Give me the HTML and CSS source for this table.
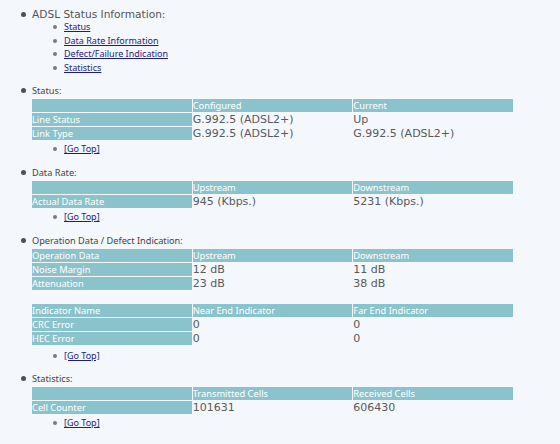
FILE: index.html
```html
<!DOCTYPE html>
<html>
<head>
<meta charset="utf-8">
<link rel="stylesheet" href="styles.css">
</head>
<body>
<ul class="main">
  <li class="section-top">
    <div class="title bullet">ADSL Status Information:</div>
    <ul class="sub">
      <li><a href="#status">Status</a></li>
      <li><a href="#rate">Data Rate Information</a></li>
      <li><a href="#defect">Defect/Failure Indication</a></li>
      <li><a href="#stats">Statistics</a></li>
    </ul>
  </li>
  <li class="section" id="status">
    <div class="label bullet">Status:</div>
    <table class="grid">
      <tr><th class="head"></th><th>Configured</th><th>Current</th></tr>
      <tr><th class="head">Line Status</th><td>G.992.5 (ADSL2+)</td><td>Up</td></tr>
      <tr><th class="head">Link Type</th><td>G.992.5 (ADSL2+)</td><td>G.992.5 (ADSL2+)</td></tr>
    </table>
    <ul class="sub"><li><a href="#">[Go Top]</a></li></ul>
  </li>
  <li class="section" id="rate">
    <div class="label bullet">Data Rate:</div>
    <table class="grid">
      <tr><th class="head"></th><th>Upstream</th><th>Downstream</th></tr>
      <tr><th class="head">Actual Data Rate</th><td>945 (Kbps.)</td><td>5231 (Kbps.)</td></tr>
    </table>
    <ul class="sub"><li><a href="#">[Go Top]</a></li></ul>
  </li>
  <li class="section" id="defect">
    <div class="label bullet">Operation Data / Defect Indication:</div>
    <table class="grid">
      <tr><th class="head">Operation Data</th><th>Upstream</th><th>Downstream</th></tr>
      <tr><th class="head">Noise Margin</th><td>12 dB</td><td>11 dB</td></tr>
      <tr><th class="head">Attenuation</th><td>23 dB</td><td>38 dB</td></tr>
    </table>
    <table class="grid second">
      <tr><th class="head">Indicator Name</th><th>Near End Indicator</th><th>Far End Indicator</th></tr>
      <tr><th class="head">CRC Error</th><td>0</td><td>0</td></tr>
      <tr><th class="head">HEC Error</th><td>0</td><td>0</td></tr>
    </table>
    <ul class="sub"><li><a href="#">[Go Top]</a></li></ul>
  </li>
  <li class="section" id="stats">
    <div class="label bullet">Statistics:</div>
    <table class="grid">
      <tr><th class="head"></th><th>Transmitted Cells</th><th>Received Cells</th></tr>
      <tr><th class="head">Cell Counter</th><td>101631</td><td>606430</td></tr>
    </table>
    <ul class="sub"><li><a href="#">[Go Top]</a></li></ul>
  </li>
</ul>
</body>
</html>
```

FILE: styles.css
```css
html, body {
  background: #f4f7fb;
}
body {
  margin: 8px;
  font-family: "DejaVu Sans", sans-serif;
  color: #4a4a4a;
}
ul {
  margin: 0;
  padding: 0;
  list-style: none;
}
.main {
  padding-left: 24px;
}
.bullet::before {
  content: "";
  display: inline-block;
  width: 5px;
  height: 5px;
  border-radius: 50%;
  background: #505050;
  margin-left: -11.5px;
  margin-right: 6.5px;
  vertical-align: 1px;
}
.title {
  font-size: 10.6px;
  line-height: 12px;
  color: #555;
}
.sub {
  padding-left: 32px;
}
.sub > li {
  font-family: "Noto Sans", sans-serif;
  font-size: 9px;
  line-height: 13.6px;
}
.sub > li::before {
  content: "";
  display: inline-block;
  width: 4px;
  height: 4px;
  border-radius: 50%;
  background: #7a7a7a;
  margin-left: -11.5px;
  margin-right: 7.5px;
  vertical-align: 1px;
}
.sub a {
  color: #1e1e7e;
  text-decoration: underline;
}
.section {
  margin-top: 11px;
}
.label {
  font-family: "Noto Sans", sans-serif;
  font-size: 9.2px;
  line-height: 12px;
  color: #444;
}
.grid {
  width: 483px;
  border-collapse: separate;
  border-spacing: 1px;
  table-layout: fixed;
  margin: 1px 0 1px -1px;
}
.grid th, .grid td {
  height: 13px;
  padding: 0;
  text-align: left;
  vertical-align: middle;
  white-space: nowrap;
  overflow: hidden;
}
.grid th {
  background: #8bc3cc;
  color: #fff;
  font-family: "Noto Sans", sans-serif;
  font-size: 9.3px;
  font-weight: normal;
  line-height: 13px;
}
.grid td {
  font-family: "DejaVu Sans", sans-serif;
  font-size: 11px;
  line-height: 13px;
  color: #5a5a5a;
}
.grid.second {
  margin-top: 12px;
  margin-bottom: 3px;
}
```
